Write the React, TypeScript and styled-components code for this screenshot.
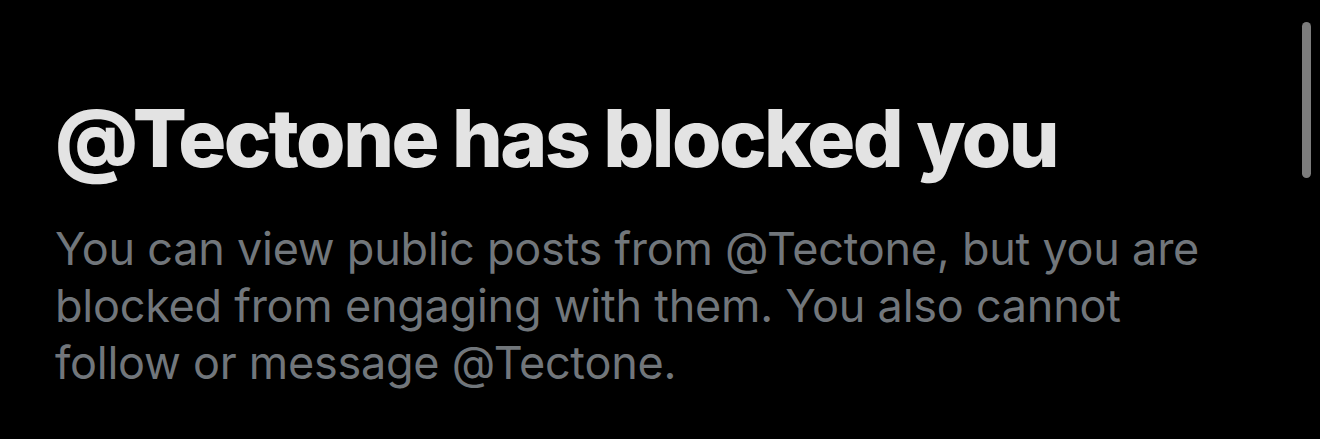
import React from "react";
import styled, { createGlobalStyle } from "styled-components";

const Global = createGlobalStyle`
  html, body { margin: 0; padding: 0; background: #000; }
  body { width: 1320px; height: 439px; overflow: hidden; }
`;

const Page = styled.div`
  position: relative;
  width: 1320px;
  height: 439px;
  background: #000;
  box-sizing: border-box;
  padding: 90px 40px 0 55px;
  display: flex;
  flex-direction: column;
  gap: 34px;
`;

const Title = styled.h1`
  margin: 0;
  font-family: Inter, "Liberation Sans", sans-serif;
  font-weight: 800;
  font-size: 80px;
  line-height: 96px;
  letter-spacing: -2.5px;
  color: #e3e3e3;
  white-space: nowrap;
`;

const Body = styled.p`
  margin: 0;
  font-family: Inter, "Liberation Sans", sans-serif;
  font-weight: 400;
  font-size: 45px;
  line-height: 57px;
  letter-spacing: -0.25px;
  color: #71767b;
  max-width: 1190px;
`;

const Scrollbar = styled.div`
  position: absolute;
  top: 22px;
  right: 9px;
  width: 9px;
  height: 156px;
  border-radius: 5px;
  background: #7c7c7c;
`;

export default function App() {
  return (
    <>
      <Global />
      <Page>
        <Title>@Tectone has blocked you</Title>
        <Body>
          You can view public posts from @Tectone, but you are blocked from engaging with them. You also cannot
          follow or message @Tectone.
        </Body>
        <Scrollbar />
      </Page>
    </>
  );
}
